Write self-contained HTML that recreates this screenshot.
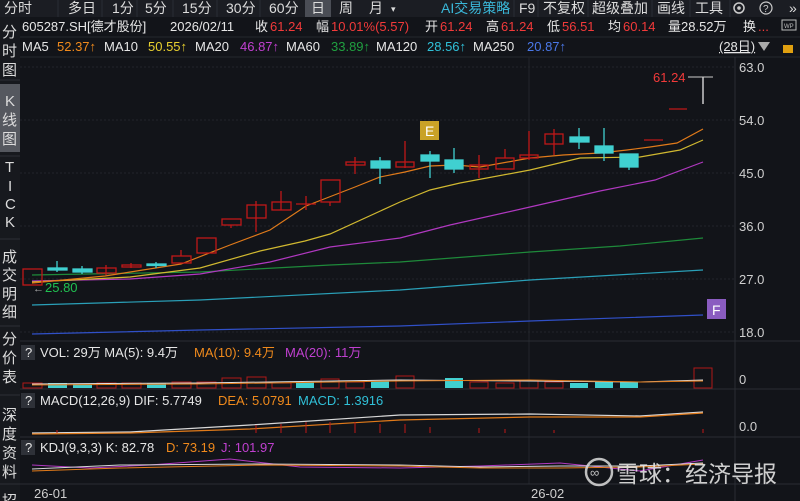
<!DOCTYPE html>
<html><head><meta charset="utf-8"><style>
html,body{margin:0;padding:0;background:#121419;overflow:hidden}
svg{display:block;font-size:13px}
text{font-family:"Liberation Sans","Noto Sans CJK SC",sans-serif}
</style></head><body>
<svg width="800" height="501" viewBox="0 0 800 501" xmlns="http://www.w3.org/2000/svg">
<rect width="800" height="501" fill="#121419"/>
<rect x="0" y="0" width="800" height="17" fill="#1b1d23"/>
<rect x="305" y="0" width="26" height="17" fill="#4a4d55"/>
<g fill="#dcdcdc" font-size="14">
<text x="4" y="13">分时</text><text x="68" y="13">多日</text><text x="112" y="13">1分</text><text x="145" y="13">5分</text><text x="182" y="13">15分</text><text x="226" y="13">30分</text><text x="269" y="13">60分</text><text x="311" y="13">日</text><text x="339" y="13">周</text><text x="369" y="13">月</text><text x="391" y="12" font-size="9">▾</text>
<text x="519" y="13">F9</text><text x="543" y="13">不复权</text><text x="592" y="13">超级叠加</text><text x="657" y="13">画线</text><text x="695" y="13">工具</text><text x="789" y="13">»</text>
</g>
<text x="441" y="13" fill="#3ab7d8" font-size="14">AI交易策略</text>
<g stroke="#2a2d34"><line x1="58" y1="0" x2="58" y2="17"/><line x1="102" y1="0" x2="102" y2="17"/><line x1="137" y1="0" x2="137" y2="17"/><line x1="173" y1="0" x2="173" y2="17"/><line x1="217" y1="0" x2="217" y2="17"/><line x1="260" y1="0" x2="260" y2="17"/><line x1="514" y1="0" x2="514" y2="17"/><line x1="538" y1="0" x2="538" y2="17"/><line x1="588" y1="0" x2="588" y2="17"/><line x1="652" y1="0" x2="652" y2="17"/><line x1="690" y1="0" x2="690" y2="17"/><line x1="730" y1="0" x2="730" y2="17"/></g>
<circle cx="739" cy="8" r="5" fill="none" stroke="#ccc" stroke-width="1.5"/><circle cx="739" cy="8" r="1.8" fill="#ccc"/>
<circle cx="766" cy="8" r="6" fill="none" stroke="#ccc" stroke-width="1.2"/><text x="763" y="12" font-size="10" fill="#ccc">?</text>
<rect x="0" y="17" width="20" height="484" fill="#17191e"/>
<rect x="0" y="84" width="20" height="68" fill="#55585f"/>
<g fill="#dcdcdc" font-size="15">
<text x="2" y="37">分</text><text x="2" y="56">时</text><text x="2" y="75">图</text>
<text x="5" y="106">K</text><text x="2" y="125">线</text><text x="2" y="144">图</text>
<text x="5" y="172">T</text><text x="8" y="191">I</text><text x="5" y="209">C</text><text x="5" y="227">K</text>
<text x="2" y="262">成</text><text x="2" y="280">交</text><text x="2" y="299">明</text><text x="2" y="317">细</text>
<text x="2" y="344">分</text><text x="2" y="363">价</text><text x="2" y="382">表</text>
<text x="2" y="420">深</text><text x="2" y="439">度</text><text x="2" y="458">资</text><text x="2" y="477">料</text>
<text x="2" y="506">招</text>
</g>
<g stroke="#2c2f36"><line x1="0" y1="80" x2="20" y2="80"/><line x1="0" y1="156" x2="20" y2="156"/><line x1="0" y1="239" x2="20" y2="239"/><line x1="0" y1="326" x2="20" y2="326"/><line x1="0" y1="395" x2="20" y2="395"/><line x1="0" y1="484" x2="20" y2="484"/></g>
<text x="22" y="31" fill="#e6e6e6">605287.SH[德才股份]</text>
<text x="170" y="31" fill="#e6e6e6">2026/02/11</text>
<text x="255" y="31" fill="#e6e6e6">收</text><text x="270" y="31" fill="#f23a3a">61.24</text>
<text x="316" y="31" fill="#e6e6e6">幅</text><text x="331" y="31" fill="#f23a3a">10.01%(5.57)</text>
<text x="425" y="31" fill="#e6e6e6">开</text><text x="440" y="31" fill="#f23a3a">61.24</text>
<text x="486" y="31" fill="#e6e6e6">高</text><text x="501" y="31" fill="#f23a3a">61.24</text>
<text x="547" y="31" fill="#e6e6e6">低</text><text x="562" y="31" fill="#f23a3a">56.51</text>
<text x="608" y="31" fill="#e6e6e6">均</text><text x="623" y="31" fill="#f23a3a">60.14</text>
<text x="668" y="31" fill="#e6e6e6">量28.52万</text><text x="743" y="31" fill="#e6e6e6">换</text><text x="758" y="31" fill="#f23a3a">...</text>
<rect x="782" y="20" width="14" height="10" fill="none" stroke="#bbb"/><text x="784" y="28" font-size="6" fill="#bbb">WP</text>
<line x1="20" y1="37" x2="800" y2="37" stroke="#24272d"/>
<text x="22" y="51" fill="#e6e6e6">MA5</text><text x="57" y="51" fill="#f08a1c">52.37↑</text>
<text x="104" y="51" fill="#e6e6e6">MA10</text><text x="148" y="51" fill="#e8d030">50.55↑</text>
<text x="195" y="51" fill="#e6e6e6">MA20</text><text x="240" y="51" fill="#c040d0">46.87↑</text>
<text x="286" y="51" fill="#e6e6e6">MA60</text><text x="331" y="51" fill="#20a040">33.89↑</text>
<text x="376" y="51" fill="#e6e6e6">MA120</text><text x="427" y="51" fill="#30c0d8">28.56↑</text>
<text x="473" y="51" fill="#e6e6e6">MA250</text><text x="527" y="51" fill="#4a78e8">20.87↑</text>
<text x="719" y="51" fill="#e6e6e6" text-decoration="underline">(28日)</text><polygon points="758,42 770,42 764,51" fill="#aaa"/>
<rect x="783" y="45" width="10" height="8" fill="#e0a010"/>
<line x1="20" y1="57" x2="800" y2="57" stroke="#24272d"/>
<g stroke="#22252b" stroke-dasharray="2,2">
<line x1="20" y1="67" x2="735" y2="67"/><line x1="20" y1="120" x2="735" y2="120"/><line x1="20" y1="173" x2="735" y2="173"/><line x1="20" y1="226" x2="735" y2="226"/><line x1="20" y1="279" x2="735" y2="279"/><line x1="20" y1="332" x2="735" y2="332"/>
</g>
<line x1="529" y1="57" x2="529" y2="484" stroke="#22252b"/>
<line x1="735" y1="57" x2="735" y2="501" stroke="#2a2d34"/>
<g fill="#cfcfcf"><text x="739" y="72">63.0</text><text x="739" y="125">54.0</text><text x="739" y="178">45.0</text><text x="739" y="231">36.0</text><text x="739" y="284">27.0</text><text x="739" y="337">18.0</text></g>
<g fill="none" stroke-width="1.2">
<polyline stroke="#3050c8" points="32,334 200,330 400,326 530,321 703,315"/>
<polyline stroke="#2aa0b8" points="32,305 200,300 400,290 530,280 703,270"/>
<polyline stroke="#1e8a3a" points="32,275 200,272 330,265 400,262 530,252 620,246 703,238"/>
<polyline stroke="#b038c0" points="32,281 130,279 200,274 270,262 330,247 400,238 450,225 530,207 600,191 655,180 703,162"/>
<polyline stroke="#d0b830" points="32,282 130,277 200,268 260,251 305,241 330,234 400,202 430,190 460,183 530,170 580,158 640,157 680,150 703,140"/>
<polyline stroke="#e07a1a" points="32,283 105,276 181,264 230,245 270,230 306,206 355,187 380,177 405,172 430,166 455,165 480,167 530,158 563,155 600,153 627,150 650,147 677,143 703,129"/>
</g>
<g stroke="#c01818" fill="none" stroke-width="1.3">
<rect x="23" y="269" width="19" height="16"/>
<line x1="106" y1="265" x2="106" y2="275"/><rect x="97" y="268" width="19" height="5"/>
<line x1="131" y1="263" x2="131" y2="268"/><rect x="122" y="265" width="19" height="2"/>
<line x1="181" y1="250" x2="181" y2="256"/><rect x="172" y="256" width="19" height="7"/>
<rect x="197" y="238" width="19" height="15"/>
<line x1="231" y1="225" x2="231" y2="228"/><rect x="222" y="219" width="19" height="6"/>
<line x1="256" y1="201" x2="256" y2="232"/><rect x="247" y="205" width="19" height="13"/>
<line x1="281" y1="191" x2="281" y2="210"/><rect x="272" y="202" width="19" height="8"/>
<line x1="306" y1="196" x2="306" y2="210"/><line x1="296" y1="204" x2="316" y2="204"/>
<line x1="330" y1="202" x2="330" y2="206"/><rect x="321" y="180" width="19" height="22"/>
<line x1="355" y1="157" x2="355" y2="174"/><rect x="346" y="162" width="19" height="3"/>
<line x1="405" y1="141" x2="405" y2="168"/><rect x="396" y="162" width="18" height="5"/>
<line x1="479" y1="155" x2="479" y2="178"/><rect x="470" y="165" width="18" height="4"/>
<line x1="505" y1="149" x2="505" y2="158"/><rect x="496" y="158" width="18" height="11"/>
<line x1="529" y1="131" x2="529" y2="160"/><rect x="520" y="155" width="18" height="3"/>
<line x1="554" y1="129" x2="554" y2="155"/><rect x="545" y="134" width="18" height="10"/>
<line x1="644" y1="140" x2="663" y2="140"/><line x1="669" y1="109" x2="687" y2="109"/>
</g>
<g stroke="#40d0d0" fill="#40d0d0" stroke-width="1.3">
<line x1="57" y1="261" x2="57" y2="272"/><rect x="48" y="268" width="19" height="2"/>
<line x1="82" y1="266" x2="82" y2="274"/><rect x="73" y="269" width="19" height="3"/>
<line x1="156" y1="262" x2="156" y2="268"/><rect x="147" y="264" width="19" height="1.5"/>
<line x1="380" y1="157" x2="380" y2="184"/><rect x="371" y="161" width="19" height="7"/>
<line x1="430" y1="151" x2="430" y2="178"/><rect x="421" y="155" width="18" height="6"/>
<line x1="454" y1="148" x2="454" y2="173"/><rect x="445" y="160" width="18" height="9"/>
<line x1="579" y1="128" x2="579" y2="149"/><rect x="570" y="137" width="19" height="5"/>
<line x1="604" y1="128" x2="604" y2="161"/><rect x="595" y="146" width="18" height="7"/>
<line x1="629" y1="154" x2="629" y2="170"/><rect x="620" y="154" width="18" height="13"/>
</g>
<line x1="703" y1="77" x2="703" y2="104" stroke="#e6e6e6" stroke-width="1.3"/>
<line x1="688" y1="77" x2="713" y2="77" stroke="#cccccc"/>
<text x="653" y="82" fill="#f23a3a">61.24</text>
<text x="45" y="292" fill="#20c050">25.80</text><text x="33" y="292" fill="#aaa" font-size="11">←</text>
<rect x="420" y="121" width="19" height="19" fill="#c9a227"/><text x="425" y="136" fill="#fff" font-size="14">E</text>
<rect x="707" y="299" width="19" height="20" fill="#8a5cc0"/><text x="712" y="315" fill="#fff" font-size="14">F</text>
<line x1="20" y1="341" x2="800" y2="341" stroke="#2a2d34"/>
<rect x="21" y="345" width="14" height="15" fill="#2e3138"/><text x="25" y="357" fill="#e6e6e6">?</text>
<text x="40" y="357" fill="#e6e6e6">VOL: 29万  MA(5): 9.4万</text>
<text x="194" y="357" fill="#f08a1c">MA(10): 9.4万</text><text x="285" y="357" fill="#c040d0">MA(20): 11万</text>
<text x="739" y="384" fill="#cfcfcf">0</text>
<g stroke="#b01818" fill="none">
<rect x="23" y="383" width="19" height="5"/><rect x="97" y="383" width="19" height="5"/><rect x="122" y="383" width="19" height="5"/><rect x="172" y="382" width="19" height="6"/><rect x="197" y="382" width="19" height="6"/><rect x="222" y="378" width="19" height="10"/><rect x="247" y="377" width="19" height="11"/><rect x="272" y="383" width="19" height="5"/><rect x="321" y="379" width="18" height="9"/><rect x="346" y="382" width="18" height="6"/><rect x="396" y="376" width="18" height="12"/><rect x="470" y="382" width="18" height="6"/><rect x="496" y="383" width="18" height="5"/><rect x="520" y="381" width="18" height="7"/><rect x="545" y="382" width="18" height="6"/><rect x="694" y="368" width="18" height="20"/>
</g>
<g fill="#40d0d0"><rect x="48" y="383" width="19" height="5"/><rect x="73" y="384" width="19" height="4"/><rect x="147" y="383" width="19" height="5"/><rect x="296" y="382" width="18" height="6"/><rect x="371" y="381" width="18" height="7"/><rect x="445" y="378" width="18" height="10"/><rect x="570" y="383" width="18" height="5"/><rect x="595" y="382" width="18" height="6"/><rect x="620" y="382" width="18" height="6"/></g>
<polyline fill="none" stroke="#e0e0e0" points="32,384 200,383 400,380 530,381 640,382 703,380"/>
<polyline fill="none" stroke="#e07a1a" points="32,385 200,384 400,381 530,380 640,382 703,381"/>
<line x1="20" y1="389" x2="800" y2="389" stroke="#2a2d34"/>
<rect x="21" y="393" width="14" height="15" fill="#2e3138"/><text x="25" y="405" fill="#e6e6e6">?</text>
<text x="40" y="405" fill="#e6e6e6">MACD(12,26,9)  DIF: 5.7749</text>
<text x="218" y="405" fill="#f08a1c">DEA: 5.0791</text><text x="298" y="405" fill="#30c0d8">MACD: 1.3916</text>
<text x="739" y="431" fill="#cfcfcf">0.0</text>
<polyline fill="none" stroke="#d8d8d8" stroke-width="1.2" points="32,433 130,432 250,425 400,415 530,414 640,416 703,412"/>
<polyline fill="none" stroke="#e07a1a" stroke-width="1.2" points="32,434 130,433 250,429 400,420 530,417 640,417 703,413"/>
<g stroke="#c01818"><line x1="57" y1="430" x2="57" y2="433"/><line x1="256" y1="425" x2="256" y2="433"/><line x1="281" y1="424" x2="281" y2="433"/><line x1="306" y1="422" x2="306" y2="433"/><line x1="330" y1="422" x2="330" y2="433"/><line x1="355" y1="422" x2="355" y2="433"/><line x1="380" y1="424" x2="380" y2="433"/><line x1="405" y1="424" x2="405" y2="433"/><line x1="430" y1="427" x2="430" y2="433"/><line x1="479" y1="428" x2="479" y2="433"/><line x1="505" y1="429" x2="505" y2="433"/><line x1="554" y1="430" x2="554" y2="433"/><line x1="703" y1="429" x2="703" y2="433"/></g>
<line x1="20" y1="437" x2="800" y2="437" stroke="#2a2d34"/>
<rect x="21" y="440" width="14" height="15" fill="#2e3138"/><text x="25" y="452" fill="#e6e6e6">?</text>
<text x="40" y="452" fill="#e6e6e6">KDJ(9,3,3)  K: 82.78</text>
<text x="166" y="452" fill="#f08a1c">D: 73.19</text><text x="221" y="452" fill="#c040d0">J: 101.97</text>
<polyline fill="none" stroke="#b038c0" points="32,465 90,468 150,465 230,459 300,467 400,468 480,466 560,463 640,471 703,460"/>
<polyline fill="none" stroke="#d8d8d8" points="32,469 120,465 260,464 400,465 480,467 560,466 640,466 703,463"/>
<polyline fill="none" stroke="#e07a1a" points="32,471 120,468 260,465 400,466 480,468 560,468 640,467 703,464"/>
<line x1="20" y1="484" x2="800" y2="484" stroke="#2a2d34"/>
<text x="34" y="498" fill="#cfcfcf">26-01</text><text x="531" y="498" fill="#cfcfcf">26-02</text>
<circle cx="599" cy="472" r="13" fill="none" stroke="#ddd" stroke-width="2.5" opacity="0.85"/>
<text x="590" y="477" fill="#ddd" font-size="13" opacity="0.85">∞</text>
<text x="616" y="482" fill="#e8e8e8" font-size="23" opacity="0.88">雪球：经济导报</text>
</svg>
</body></html>
